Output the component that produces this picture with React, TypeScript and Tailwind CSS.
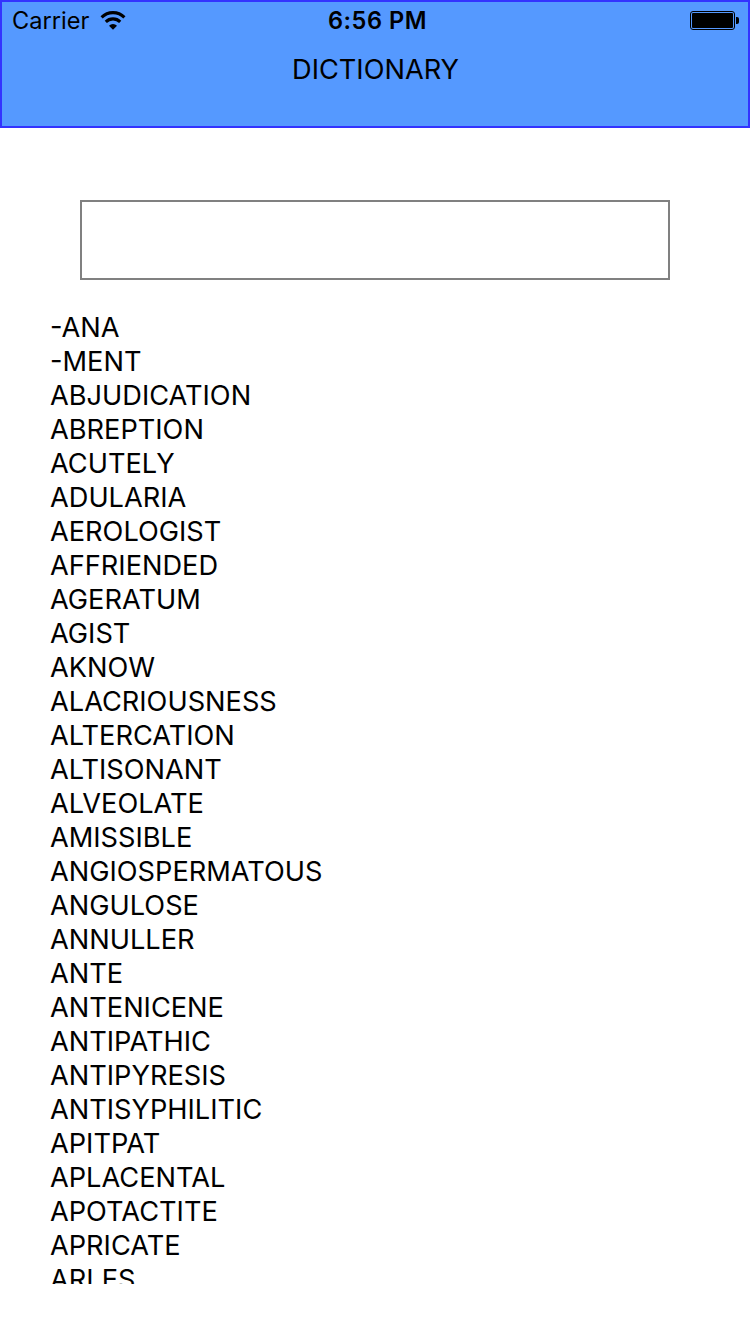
const words = [
  '-ANA', '-MENT', 'ABJUDICATION', 'ABREPTION', 'ACUTELY', 'ADULARIA', 'AEROLOGIST', 'AFFRIENDED',
  'AGERATUM', 'AGIST', 'AKNOW', 'ALACRIOUSNESS', 'ALTERCATION', 'ALTISONANT', 'ALVEOLATE', 'AMISSIBLE',
  'ANGIOSPERMATOUS', 'ANGULOSE', 'ANNULLER', 'ANTE', 'ANTENICENE', 'ANTIPATHIC', 'ANTIPYRESIS',
  'ANTISYPHILITIC', 'APITPAT', 'APLACENTAL', 'APOTACTITE', 'APRICATE', 'ARLES',
]

function WifiIcon() {
  return (
    <svg className="mb-0.5" width="26" height="20" viewBox="0 0 26 20" aria-hidden="true">
      <path d="M1.6 7.3a16.2 16.2 0 0 1 22.8 0M5.8 11.9a10.2 10.2 0 0 1 14.4 0" fill="none" stroke="black" strokeWidth="3.1" />
      <path d="M13 19.7L9 15.7a5.8 5.8 0 0 1 8 0Z" />
    </svg>
  )
}

function BatteryIcon() {
  return (
    <svg className="mb-0.5" width="49" height="19" viewBox="0 0 49 19" aria-hidden="true">
      <rect x="0.5" y="0.5" width="44" height="18" rx="2.5" fill="none" stroke="black" />
      <rect x="2" y="2" width="41" height="15" rx="1" />
      <path d="M46 6h1a2 2 0 0 1 2 2v3a2 2 0 0 1-2 2h-1Z" />
    </svg>
  )
}

export default function App() {
  return (
    <div className="flex h-[1334px] w-[750px] flex-col overflow-hidden bg-white font-['Inter',sans-serif] text-black">
      <header className="h-32 shrink-0 border-2 border-[#3333ff] bg-[#5599ff]">
        <div className="grid h-[38px] grid-cols-3 items-center pl-2.5 pr-[9px]">
          <div className="flex items-center gap-[11px] text-[23.6px]">
            <span>Carrier</span>
            <WifiIcon />
          </div>
          <span className="pl-1 text-center text-[23.6px] font-semibold tracking-[0.5px]">6:56 PM</span>
          <div className="flex justify-end">
            <BatteryIcon />
          </div>
        </div>
        <h1 className="pt-px pl-px text-center text-[27.2px] leading-[58px] font-[370]">DICTIONARY</h1>
      </header>
      <input aria-label="Search" className="mx-20 mt-[72px] h-20 shrink-0 border-2 border-[#808080]" />
      <ul className="mt-[30px] ml-[50px] h-[974px] shrink-0 overflow-hidden pt-px text-[27.2px] leading-[34px] font-[370]">
        {words.map((word) => <li key={word}>{word}</li>)}
      </ul>
    </div>
  )
}
